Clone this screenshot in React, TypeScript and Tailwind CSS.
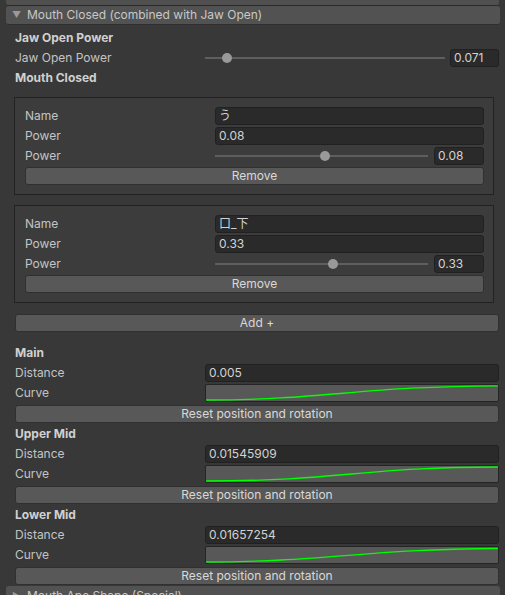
import React from "react";

const FONT = { fontFamily: "Inter, 'Noto Sans CJK JP', sans-serif" };

function Field({ value, className = "" }: { value: string; className?: string }) {
  return (
    <div
      className={
        "h-[18px] bg-[#2a2a2a] border border-[#212121] rounded-[3px] flex items-center px-[3px] text-[#d2d2d2] leading-none " +
        className
      }
    >
      {value}
    </div>
  );
}

function Slider({ pct }: { pct: number }) {
  return (
    <div className="relative flex-1 h-[18px] flex items-center">
      <div className="w-full h-[2px] bg-[#5e5e5e]" />
      <div
        className="absolute top-1/2 w-[10px] h-[10px] -mt-[5px] -ml-[5px] rounded-full bg-[#999999]"
        style={{ left: `${pct}%` }}
      />
    </div>
  );
}

function Button({ label, className = "" }: { label: string; className?: string }) {
  return (
    <div
      className={
        "h-[18px] bg-[#585858] border border-[#303030] rounded-[3px] flex items-center justify-center text-[#d8d8d8] leading-none " +
        className
      }
    >
      {label}
    </div>
  );
}

function Curve({ d }: { d: string }) {
  return (
    <div className="flex-1 h-[18px] bg-[#585858] border border-[#242424] rounded-[2px] overflow-hidden">
      <svg viewBox="0 0 100 16" preserveAspectRatio="none" className="w-full h-full block">
        <path d={d} fill="none" stroke="#00ff00" strokeWidth="1.3" vectorEffect="non-scaling-stroke" />
      </svg>
    </div>
  );
}

function ShapeBox({ name, power, pct }: { name: string; power: string; pct: number }) {
  return (
    <div className="ml-[14px] mr-[11px] border border-[#222222] bg-[#3c3c3c] bg-[radial-gradient(#454545_0.6px,transparent_0.6px)] bg-[size:4px_4px] pt-[8px] pb-[9px] pl-[10px] pr-[9px]">
      <div className="flex items-center h-[20px]">
        <div className="w-[190px]">Name</div>
        <Field value={name} className="flex-1" />
      </div>
      <div className="flex items-center h-[20px]">
        <div className="w-[190px]">Power</div>
        <Field value={power} className="flex-1" />
      </div>
      <div className="flex items-center h-[20px]">
        <div className="w-[190px]">Power</div>
        <Slider pct={pct} />
        <Field value={power} className="w-[50px] ml-[6px]" />
      </div>
      <Button label="Remove" className="mt-[1px]" />
    </div>
  );
}

function Section({ title, dist, d }: { title: string; dist: string; d: string }) {
  return (
    <div className="pl-[15px] pr-[6px]">
      <div className="h-[20px] flex items-center font-bold text-[#d0d0d0]">{title}</div>
      <div className="flex items-center h-[20px]">
        <div className="w-[190px]">Distance</div>
        <Field value={dist} className="flex-1" />
      </div>
      <div className="flex items-center h-[20px]">
        <div className="w-[190px]">Curve</div>
        <Curve d={d} />
      </div>
      <Button label="Reset position and rotation" className="mt-[2px]" />
      <div className="h-[1px]" />
    </div>
  );
}

export default function App() {
  return (
    <div className="w-[505px] h-[595px] bg-[#383838] overflow-hidden text-[12px] text-[#c4c4c4]" style={FONT}>
      <div className="ml-[6px] mr-[6px] h-[6px] bg-[#505050] rounded-b-[3px] border-b border-[#2a2a2a]" />
      <div className="ml-[6px] mr-[5px] mt-[0px] h-[19px] bg-[#525252] rounded-[3px] border-b border-[#2e2e2e] flex items-center text-[#c8c8c8]">
        <span className="ml-[6px] w-[15px] text-[9px] text-[#9a9a9a]">▼</span>
        <span>Mouth Closed (combined with Jaw Open)</span>
      </div>
      <div className="pt-[3px]">
        <div className="pl-[15px] pr-[6px]">
          <div className="h-[20px] flex items-center font-bold text-[#d0d0d0]">Jaw Open Power</div>
          <div className="flex items-center h-[20px]">
            <div className="w-[190px]">Jaw Open Power</div>
            <Slider pct={9} />
            <Field value="0.071" className="w-[49px] ml-[5px]" />
          </div>
          <div className="h-[19px] flex items-center font-bold text-[#d0d0d0]">Mouth Closed</div>
        </div>
        <div className="h-[10px]" />
        <ShapeBox name="う" power="0.08" pct={51.6} />
        <div className="h-[10px]" />
        <ShapeBox name="口_下" power="0.33" pct={55.4} />
        <div className="pl-[15px] pr-[6px] mt-[11px] mb-[11px]">
          <Button label="Add +" />
        </div>
        <Section title="Main" dist="0.005" d="M0,15 C40,15 55,1 100,0.8" />
        <Section title="Upper Mid" dist="0.01545909" d="M0,15 C45,15 55,1 100,1" />
        <Section title="Lower Mid" dist="0.01657254" d="M0,15 C40,15 55,2 100,1.5" />
      </div>
      <div className="ml-[6px] mr-[5px] h-[19px] bg-[#525252] rounded-[3px] flex items-center text-[#c8c8c8]">
        <span className="ml-[6px] w-[15px] text-[9px] text-[#9a9a9a]">▶</span>
        <span>Mouth Ape Shape (Special)</span>
      </div>
    </div>
  );
}
